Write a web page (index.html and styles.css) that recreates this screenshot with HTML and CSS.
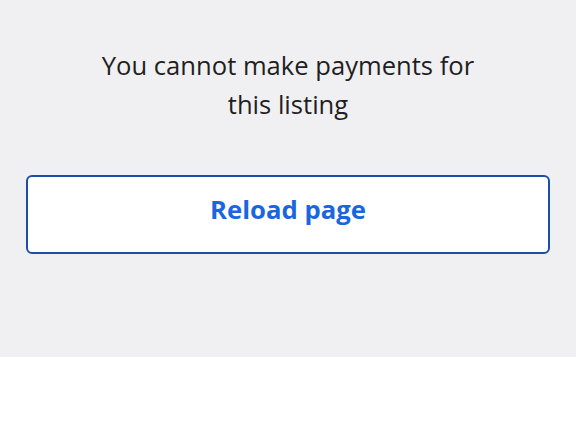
FILE: index.html
```html
<!DOCTYPE html>
<html>
<head>
<meta charset="utf-8">
<link rel="stylesheet" href="styles.css">
</head>
<body>
<main class="panel">
  <p class="message">You cannot make payments for<br>this listing</p>
  <button class="reload">Reload page</button>
</main>
</body>
</html>
```
FILE: styles.css
```css
html, body {
  margin: 0;
  padding: 0;
  background: #ffffff;
}
body {
  font-family: "Open Sans", "Noto Sans", sans-serif;
}
.panel {
  background: #f0f0f2;
  height: 357px;
  box-sizing: border-box;
  padding: 46px 26px 0;
  display: flex;
  flex-direction: column;
}
.message {
  margin: 0;
  text-align: center;
  font-size: 25.6px;
  line-height: 39px;
  color: #1f1f1f;
}
.reload {
  margin-top: 51px;
  height: 79px;
  background: #ffffff;
  border: 2px solid #1b4ea6;
  border-radius: 6px;
  font-family: "Open Sans", "Noto Sans", sans-serif;
  font-weight: 700;
  font-size: 25.7px;
  color: #1a66e0;
  padding: 0 0 11px;
}
```
